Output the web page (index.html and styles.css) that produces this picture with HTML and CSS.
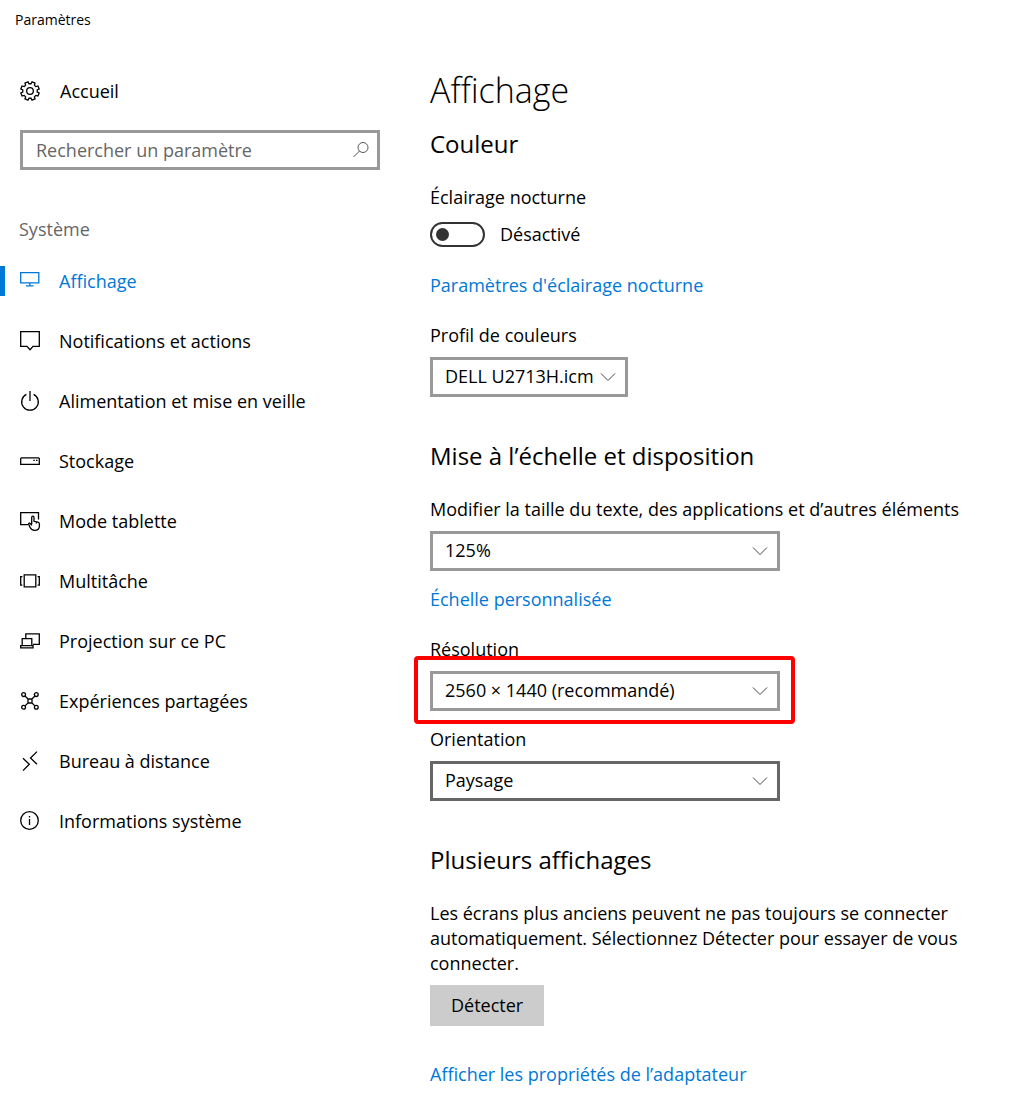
FILE: index.html
```html
<!DOCTYPE html>
<html lang="fr">
<head>
  <meta charset="UTF-8">
  <meta name="viewport" content="width=device-width, initial-scale=1.0">
  <title>Paramètres</title>
  <link rel="stylesheet" href="styles.css">
</head>
<body>

  <header class="titlebar">Paramètres</header>

  <div class="layout">
    <aside class="sidebar">
      <a class="home" href="#">
        <svg class="icon" viewBox="0 0 20 20" aria-hidden="true">
          <path d="M11.02 2.77L12.03.82L15.05 2.07L14.39 4.17L15.83 5.61L17.93 4.95L19.18 7.97L17.23 8.98V11.02L19.18 12.03L17.93 15.05L15.83 14.39L14.39 15.83L15.05 17.93L12.03 19.18L11.02 17.23H8.98L7.97 19.18L4.95 17.93L5.61 15.83L4.17 14.39L2.07 15.05L.82 12.03L2.77 11.02V8.98L.82 7.97L2.07 4.95L4.17 5.61L5.61 4.17L4.95 2.07L7.97.82L8.98 2.77Z"/>
          <circle cx="10" cy="10" r="3.3"/>
        </svg>
        Accueil
      </a>

      <div class="search">
        <input type="text" placeholder="Rechercher un paramètre" aria-label="Rechercher un paramètre">
        <svg class="search-icon" viewBox="0 0 18 18" aria-hidden="true">
          <circle cx="11" cy="6.5" r="5"/>
          <path d="M7.5 10L1.5 16"/>
        </svg>
      </div>

      <h2 class="group-title">Système</h2>

      <nav class="menu">
        <a class="active" href="#">
          <svg class="icon" viewBox="0 0 20 20" aria-hidden="true">
            <path d="M.7 1.7H18.8V11.8H.7ZM9.8 11.8V14.5M6 14.8H13.5"/>
          </svg>
          Affichage
        </a>
        <a href="#">
          <svg class="icon" viewBox="0 0 20 20" aria-hidden="true">
            <path d="M.7.7H19.3V15.4H13L10 18.7L7 15.4H.7Z"/>
          </svg>
          Notifications et actions
        </a>
        <a href="#">
          <svg class="icon" viewBox="0 0 20 20" aria-hidden="true">
            <path d="M10 0V10M6.4 3.4A8.3 8.3 0 1 0 13.6 3.4"/>
          </svg>
          Alimentation et mise en veille
        </a>
        <a href="#">
          <svg class="icon" viewBox="0 0 20 20" aria-hidden="true">
            <path d="M1.5 6.8H18.5L19.3 7.6V13.4H.7V7.6ZM13.3 9.3H14.8M16 9.3H17.5"/>
          </svg>
          Stockage
        </a>
        <a href="#">
          <svg class="icon" viewBox="0 0 20 20" aria-hidden="true">
            <path d="M8.3 13.7H.7V1.6H18.5V8.5"/>
            <path d="M11.7 13.5V6.8C11.7 4.6 14 4.6 14 6.8V10.3L18 11.2C19 11.5 19.4 12 19.4 13V15C19.4 17.8 17.4 19.4 14.6 19.4C12.3 19.4 11 18.5 10 16.3L8.7 13.3C8.4 12.2 9.7 11.7 10.3 12.4L11.7 14.5M16.3 11V12.5"/>
          </svg>
          Mode tablette
        </a>
        <a href="#">
          <svg class="icon" viewBox="0 0 20 20" aria-hidden="true">
            <path d="M4.2 3.9H15.8V15.9H4.2ZM2.4 5.6H.7V14.2H2.4M17.6 5.6H19.3V14.2H17.6"/>
          </svg>
          Multitâche
        </a>
        <a href="#">
          <svg class="icon" viewBox="0 0 20 20" aria-hidden="true">
            <path d="M5.8 7V2.8H19.3V13.3H13M2.2 14.5V7.7H11.8V14.5M.7 14.6H13V16.9H.7Z"/>
          </svg>
          Projection sur ce PC
        </a>
        <a href="#">
          <svg class="icon" viewBox="0 0 20 20" aria-hidden="true">
            <circle cx="3.6" cy="3.6" r="1.9"/>
            <circle cx="16.3" cy="3.6" r="1.9"/>
            <circle cx="3.6" cy="16.3" r="1.9"/>
            <circle cx="16.3" cy="16.3" r="1.9"/>
            <path d="M8 8H12V12H8ZM5 5L8 8M14.9 5L12 8M5 14.9L8 12M14.9 14.9L12 12"/>
          </svg>
          Expériences partagées
        </a>
        <a href="#">
          <svg class="icon" viewBox="0 0 20 20" aria-hidden="true">
            <path d="M3 7.3L9.3 13.3L3 19.6M17 .6L10.5 7L17 13.3"/>
          </svg>
          Bureau à distance
        </a>
        <a href="#">
          <svg class="icon" viewBox="0 0 20 20" aria-hidden="true">
            <circle cx="9.5" cy="9.5" r="8.8"/>
            <path d="M9.5 8V14M9.5 5V6.5"/>
          </svg>
          Informations système
        </a>
      </nav>
    </aside>

    <main class="content">
      <h1>Affichage</h1>

      <section>
        <h2>Couleur</h2>
        <label for="night">Éclairage nocturne</label>
        <div class="toggle">
          <input type="checkbox" id="night" role="switch">
          <span>Désactivé</span>
        </div>
        <a class="link" href="#">Paramètres d'éclairage nocturne</a>
        <label for="profile">Profil de couleurs</label>
        <div class="select compact">
          <select id="profile">
            <option>DELL U2713H.icm</option>
          </select>
          <svg class="chevron" viewBox="0 0 16 10" aria-hidden="true"><path d="M1 1.5L8 8.5L15 1.5"/></svg>
        </div>
      </section>

      <section>
        <h2>Mise à l’échelle et disposition</h2>
        <label for="scale">Modifier la taille du texte, des applications et d’autres éléments</label>
        <div class="select">
          <select id="scale">
            <option>100%</option>
            <option selected>125%</option>
            <option>150%</option>
          </select>
          <svg class="chevron" viewBox="0 0 16 10" aria-hidden="true"><path d="M1 1.5L8 8.5L15 1.5"/></svg>
        </div>
        <a class="link" href="#">Échelle personnalisée</a>
        <label for="resolution">Résolution</label>
        <div class="select highlight">
          <select id="resolution">
            <option>2560 × 1440 (recommandé)</option>
          </select>
          <svg class="chevron" viewBox="0 0 16 10" aria-hidden="true"><path d="M1 1.5L8 8.5L15 1.5"/></svg>
        </div>
        <label for="orientation">Orientation</label>
        <div class="select hovered">
          <select id="orientation">
            <option>Paysage</option>
            <option>Portrait</option>
          </select>
          <svg class="chevron" viewBox="0 0 16 10" aria-hidden="true"><path d="M1 1.5L8 8.5L15 1.5"/></svg>
        </div>
      </section>

      <section>
        <h2>Plusieurs affichages</h2>
        <p>Les écrans plus anciens peuvent ne pas toujours se connecter automatiquement. Sélectionnez Détecter pour essayer de vous connecter.</p>
        <button type="button">Détecter</button>
        <a class="link" href="#">Afficher les propriétés de l’adaptateur</a>
      </section>
    </main>
  </div>

</body>
</html>
```

FILE: styles.css
```css
* {
  box-sizing: border-box;
}

body {
  margin: 0;
  background: #fff;
  color: #000;
  font-family: 'Segoe UI', 'Open Sans', 'Noto Sans', sans-serif;
  font-size: 18px;
  line-height: 25px;
}

h1, h2, p {
  margin: 0;
  font-weight: 400;
}

a {
  color: inherit;
  text-decoration: none;
}

input, select, button {
  font: inherit;
  color: inherit;
}

.titlebar {
  padding: 0 15px;
  font-size: 14px;
  line-height: 40px;
}

.layout {
  display: grid;
  grid-template-columns: 400px 1fr;
}

/* Left column */
.sidebar {
  padding-top: 30px;
}

.icon {
  width: 20px;
  height: 20px;
  flex: none;
  overflow: visible;
  fill: none;
  stroke: currentColor;
  stroke-width: 1.3;
}

.home {
  display: flex;
  align-items: center;
  gap: 20px;
  height: 42px;
  padding: 0 20px;
}

.search {
  display: grid;
  align-items: center;
  margin: 18px 20px 0;
}

.search input {
  grid-area: 1 / 1;
  width: 100%;
  height: 40px;
  padding: 0 40px 0 13px;
  border: 3px solid #999;
  border-radius: 0;
  background: #fff;
}

.search input::placeholder {
  color: #666;
  opacity: 1;
}

.search-icon {
  grid-area: 1 / 1;
  justify-self: end;
  width: 18px;
  height: 18px;
  margin-right: 10px;
  fill: none;
  stroke: #555;
}

.group-title {
  margin: 47px 19px 9px;
  color: #666;
  font-size: 18px;
}

.menu a {
  display: flex;
  align-items: center;
  gap: 19px;
  height: 60px;
  padding: 0 20px;
}

.menu .active {
  color: #0078d7;
}

.menu .active::before {
  content: '';
  width: 5px;
  height: 30px;
  margin: 0 -4px 0 -20px;
  background: #0078d7;
}

/* Right column */
.content {
  padding: 30px 50px 30px 30px;
}

h1 {
  margin-bottom: 19px;
  font-size: 34px;
  font-weight: 300;
  line-height: 40px;
}

.content h2 {
  margin-bottom: 26px;
  font-size: 24px;
  line-height: 30px;
}

section + section {
  margin-top: 44px;
}

label {
  display: block;
}

.link {
  display: block;
  color: #0078d7;
}

.link + label {
  margin-top: 25px;
}

.toggle {
  display: flex;
  align-items: center;
  gap: 15px;
  margin: 12px 0 26px;
}

.toggle input {
  appearance: none;
  display: flex;
  align-items: center;
  width: 55px;
  height: 25px;
  margin: 0;
  padding: 0 4px;
  border: 2px solid #333;
  border-radius: 13px;
}

.toggle input::before {
  content: '';
  width: 13px;
  height: 13px;
  border-radius: 50%;
  background: #333;
}

.toggle input:checked {
  justify-content: flex-end;
}

.select {
  position: relative;
  display: grid;
  align-items: center;
  max-width: 350px;
  margin: 9px 0 16px;
}

.select select {
  appearance: none;
  grid-area: 1 / 1;
  width: 100%;
  height: 40px;
  padding: 0 37px 2px 12px;
  border: 3px solid #999;
  border-radius: 0;
  background: #fff;
}

.compact {
  width: fit-content;
}

.compact select {
  padding-right: 31px;
}

.hovered select {
  border-color: #666;
}

.chevron {
  grid-area: 1 / 1;
  justify-self: end;
  width: 16px;
  height: 10px;
  margin-right: 12px;
  fill: none;
  stroke: #444;
  pointer-events: none;
}

/* Red frame around the resolution list */
.highlight::after {
  content: '';
  position: absolute;
  inset: -15px -15px -13px -16px;
  border: 4px solid #f00;
  border-radius: 4px;
  pointer-events: none;
}

button {
  display: block;
  height: 41px;
  margin: 9px 0 36px;
  padding: 0 21px;
  border: 0;
  background: #ccc;
}
```
